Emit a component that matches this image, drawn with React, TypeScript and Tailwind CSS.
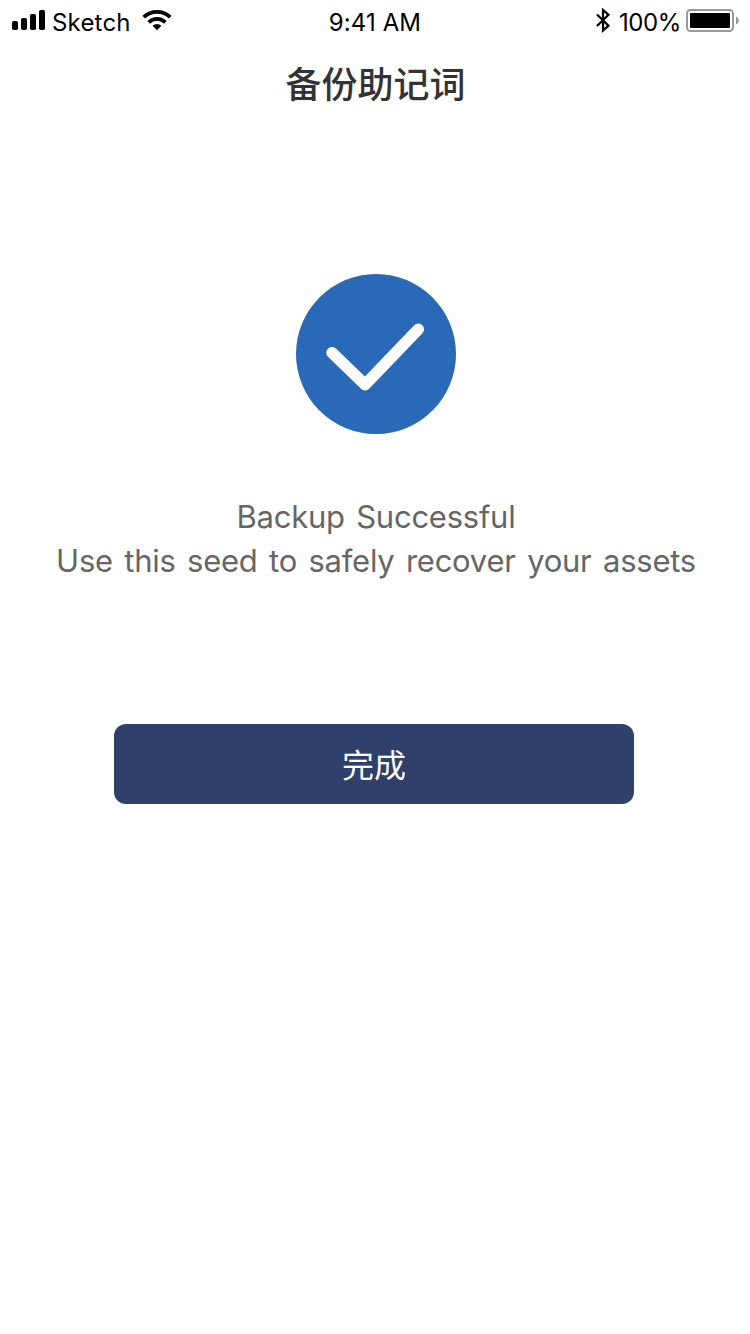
import React from 'react';

const latin = "font-['Inter','Noto_Sans_CJK_SC',sans-serif]";
const cjk = "font-['Noto_Sans_CJK_SC',sans-serif]";

function StatusBar() {
  return (
    <header className={`${latin} grid h-10 grid-cols-[1fr_auto_1fr] items-start text-[24px] leading-[46px] text-black`}>
      <div className="flex pl-3">
        <svg className="h-10 w-[34px]" viewBox="0 0 34 40">
          <rect x="0" y="21" width="6" height="9" rx="1.8" />
          <rect x="9" y="18" width="6" height="12" rx="1.8" />
          <rect x="18" y="14" width="6" height="16" rx="1.8" />
          <rect x="27" y="10" width="6" height="20" rx="1.8" />
        </svg>
        <span className="ml-[6px] w-[79px] whitespace-nowrap tracking-[0.2px]">Sketch</span>
        <svg className="ml-[11px] h-10 w-[30px]" viewBox="142 0 30 40" fill="none" stroke="#000">
          <path d="M143.7 17.2a19.3 19.3 0 0 1 26.6 0" strokeWidth="3.7" />
          <path d="M148.7 22.3a12 12 0 0 1 16.6 0" strokeWidth="3.7" />
          <path d="M157 30.2l-4.4-4.4a6.3 6.3 0 0 1 8.8 0z" fill="#000" stroke="none" />
        </svg>
      </div>
      <div className="whitespace-nowrap tracking-[0.1px]">9:41 AM</div>
      <div className="flex justify-end pr-[10px]">
        <svg className="h-10 w-[16px]" viewBox="595 0 16 40" fill="none" stroke="#000" strokeWidth="2.2">
          <path d="M597 14.500l11.500 11.200-5.500 4.800V10l5.500 4.800-11.500 11.200" />
        </svg>
        <span className="ml-[8px] w-[62px] whitespace-nowrap tracking-[-0.4px]">100%</span>
        <svg className="ml-[5px] h-10 w-[54px]" viewBox="686 0 54 40">
          <rect x="687" y="10" width="46" height="21" rx="3.500" fill="none" stroke="#999" strokeWidth="2" />
          <rect x="690" y="13" width="40" height="15" rx="0.8" />
          <path d="M736 16.500c1.800 1 2.800 2.300 2.800 4s-1 3-2.800 4z" fill="#999" />
        </svg>
      </div>
    </header>
  );
}

export default function App() {
  return (
    <div className="flex h-[1334px] w-[750px] flex-col overflow-hidden bg-white">
      <StatusBar />
      <h1 className={`${cjk} h-[88px] pl-px text-center text-[36px] font-medium leading-[85px] text-[#333]`}>备份助记词</h1>
      <main className="flex flex-col items-center">
        <svg className="ml-[2px] mt-[146px] size-[160px]" viewBox="296 274 160 160">
          <circle cx="376" cy="354" r="80" fill="#2969b8" />
          <path d="M332 352.700l33 32L418.300 329.300" fill="none" stroke="#fff" strokeWidth="11.500" strokeLinecap="round" strokeLinejoin="round" />
        </svg>
        <div className={`${latin} ml-[2px] mt-[61px] whitespace-nowrap text-center text-[31px] font-normal leading-[44px] tracking-[-0.25px] text-[#666] [word-spacing:3px]`}>
          <p>Backup Successful</p>
          <p>Use this seed to safely recover your assets</p>
        </div>
        <button className={`${cjk} mr-[2px] mt-[141px] h-20 w-[520px] rounded-[12px] bg-[#2f406b] text-[32px] font-normal leading-[78px] text-white`}>
          <span className="block h-20">完成</span>
        </button>
      </main>
    </div>
  );
}
